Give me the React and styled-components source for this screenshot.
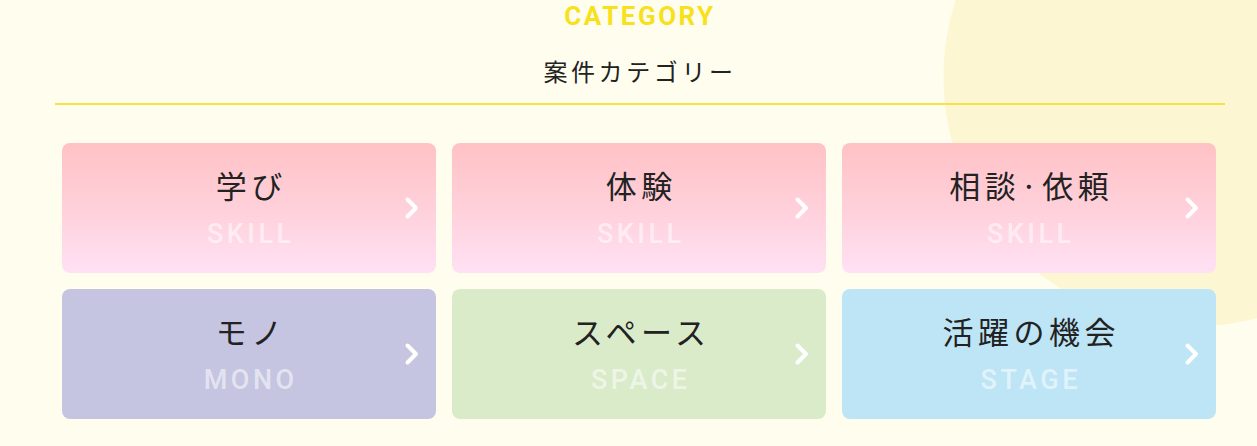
import React from 'react';
import styled, { createGlobalStyle } from 'styled-components';

const GlobalStyle = createGlobalStyle`
	html, body {
		margin: 0;
		padding: 0;
	}
	body {
		background-color: #fffeee;
		background-image: radial-gradient(circle 250px at 1193px 77px, #fdf6d3 249px, rgba(253, 246, 211, 0) 250px);
		background-repeat: no-repeat;
		font-family: 'Noto Sans CJK JP', 'Noto Sans', sans-serif;
		min-height: 446px;
	}
`;

const categories = [
	{ title: '学び', sub: 'SKILL', tone: 'pink' },
	{ title: '体験', sub: 'SKILL', tone: 'pink' },
	{ title: '相談·依頼', sub: 'SKILL', tone: 'pink' },
	{ title: 'モノ', sub: 'MONO', tone: 'purple' },
	{ title: 'スペース', sub: 'SPACE', tone: 'green' },
	{ title: '活躍の機会', sub: 'STAGE', tone: 'blue' },
];

const tones = {
	pink: 'linear-gradient(180deg, #ffc2c5 0%, #ffd0da 50%, #ffe1f4 100%)',
	purple: '#c5c5e1',
	green: '#daebca',
	blue: '#bde5f6',
};

export default function App() {
	return (
		<>
			<GlobalStyle />
			<Section>
				<Header>
					<Eyebrow>CATEGORY</Eyebrow>
					<Heading>案件カテゴリー</Heading>
				</Header>
				<Grid>
					{categories.map((c) => (
						<Card key={c.title} tone={c.tone}>
							<Label>
								<Title>{c.title}</Title>
								<Sub>{c.sub}</Sub>
							</Label>
							<Chevron width='16' height='24' viewBox='0 0 16 24'>
								<polyline points='3.5,3.5 12,12 3.5,20.5' />
							</Chevron>
						</Card>
					))}
				</Grid>
			</Section>
		</>
	);
}

const Section = styled.section`
	width: 1170px;
	margin-left: 55px;
`;

const Header = styled.header`
	display: flex;
	flex-direction: column;
	align-items: center;
	border-bottom: 2px solid #f6e146;
	padding-bottom: 14px;
`;

const Eyebrow = styled.p`
	margin: 0;
	font-family: 'Roboto', 'Liberation Sans', sans-serif;
	font-weight: 700;
	font-size: 26px;
	line-height: 32px;
	letter-spacing: 2.5px;
	color: #f8e11c;
`;

const Heading = styled.h2`
	margin: 21px 0 0;
	font-family: 'Noto Sans CJK JP', sans-serif;
	font-weight: 400;
	font-size: 24px;
	line-height: 36px;
	letter-spacing: 3.6px;
	color: #222;
`;

const Grid = styled.div`
	display: grid;
	grid-template-columns: repeat(3, 374px);
	grid-auto-rows: 130px;
	gap: 16px;
	padding: 38px 9px 0 7px;
`;

const Card = styled.a`
	display: grid;
	grid-template-columns: 48px 1fr 48px;
	align-items: center;
	border-radius: 8px;
	background: ${(p) => tones[p.tone]};
	cursor: pointer;
`;

const Label = styled.div`
	grid-column: 2;
	display: flex;
	flex-direction: column;
	align-items: center;
	padding-bottom: 2px;
`;

const Title = styled.span`
	font-family: 'Noto Sans CJK JP', sans-serif;
	font-weight: 400;
	font-size: 31px;
	line-height: 40px;
	letter-spacing: 4.5px;
	margin-right: -4.5px;
	color: #222;
`;

const Sub = styled.span`
	margin-top: 13px;
	font-family: 'Roboto', 'Liberation Sans', sans-serif;
	font-weight: 500;
	font-size: 27px;
	line-height: 32px;
	letter-spacing: 3.5px;
	margin-right: -3.5px;
	color: rgba(255, 255, 255, 0.55);
`;

const Chevron = styled.svg`
	grid-column: 3;
	justify-self: center;
	fill: none;
	stroke: #fff;
	stroke-width: 4;
	stroke-linecap: round;
	stroke-linejoin: round;
`;
